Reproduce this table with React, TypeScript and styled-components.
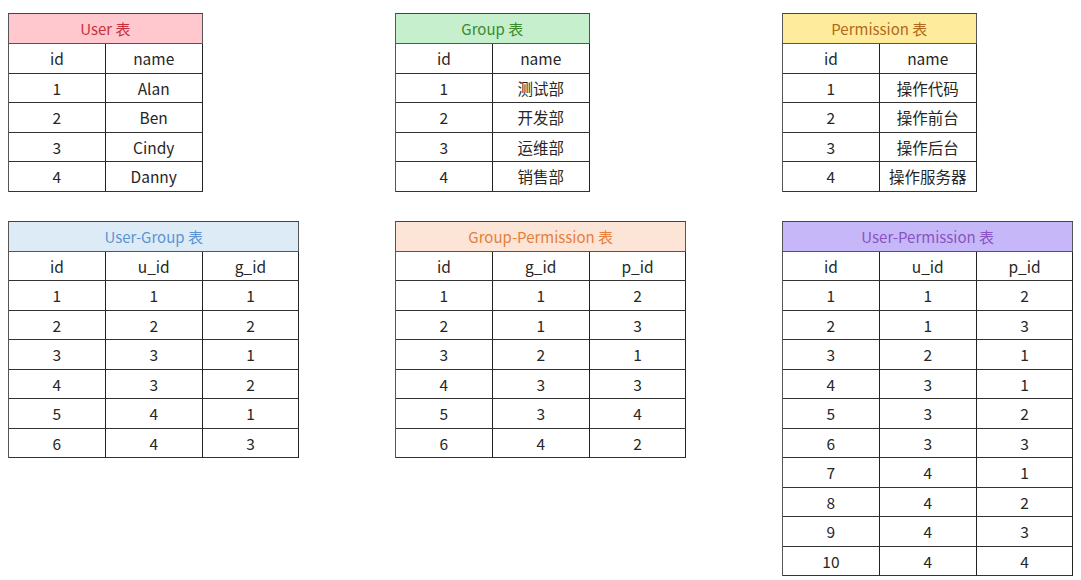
import React from 'react';
import styled, { createGlobalStyle } from 'styled-components';

const GlobalStyle = createGlobalStyle`
  html, body {
    margin: 0;
    padding: 0;
    background: #ffffff;
  }
  body {
    font-family: 'Noto Sans CJK SC', 'Noto Sans', sans-serif;
    color: #262626;
  }
`;

const Page = styled.div`
  display: grid;
  grid-template-columns: 387px 387px 290px;
  row-gap: 25px;
  align-items: start;
  padding: 13px 0 0 8px;
  width: 1081px;
  height: 580px;
  box-sizing: border-box;
  overflow: hidden;
`;

const Sheet = styled.div<{ cols: number }>`
  display: grid;
  grid-template-columns: repeat(${(p) => p.cols}, 96.8px);
  width: max-content;
  border-top: 1px solid #444;
  border-left: 1px solid #555;
`;

const Title = styled.div<{ bg: string; fg: string }>`
  grid-column: 1 / -1;
  height: 30px;
  box-sizing: border-box;
  display: flex;
  align-items: center;
  justify-content: center;
  background: ${(p) => p.bg};
  color: ${(p) => p.fg};
  font-size: 15px;
  border-right: 1px solid #555;
  border-bottom: 1px solid #555;
`;

const Cell = styled.div`
  height: 29.5px;
  box-sizing: border-box;
  display: flex;
  align-items: center;
  justify-content: center;
  font-size: 15.5px;
  border-right: 1px solid #222;
  border-bottom: 1px solid #333;
  white-space: nowrap;
`;

type TableProps = {
  title: string;
  bg: string;
  fg: string;
  head: string[];
  rows: (string | number)[][];
};

const DataTable: React.FC<TableProps> = ({ title, bg, fg, head, rows }) => (
  <Sheet cols={head.length}>
    <Title bg={bg} fg={fg}>{title}</Title>
    {head.map((h) => (
      <Cell key={h}>{h}</Cell>
    ))}
    {rows.map((r, i) => r.map((v, j) => <Cell key={`${i}:${j}`}>{v}</Cell>))}
  </Sheet>
);

const tables: TableProps[] = [
  {
    title: 'User 表',
    bg: '#ffc7ce',
    fg: '#c7303c',
    head: ['id', 'name'],
    rows: [[1, 'Alan'], [2, 'Ben'], [3, 'Cindy'], [4, 'Danny']],
  },
  {
    title: 'Group 表',
    bg: '#c6efce',
    fg: '#3a8a2e',
    head: ['id', 'name'],
    rows: [[1, '测试部'], [2, '开发部'], [3, '运维部'], [4, '销售部']],
  },
  {
    title: 'Permission 表',
    bg: '#ffeb9c',
    fg: '#b0681c',
    head: ['id', 'name'],
    rows: [[1, '操作代码'], [2, '操作前台'], [3, '操作后台'], [4, '操作服务器']],
  },
  {
    title: 'User-Group 表',
    bg: '#ddebf7',
    fg: '#5b95d0',
    head: ['id', 'u_id', 'g_id'],
    rows: [[1, 1, 1], [2, 2, 2], [3, 3, 1], [4, 3, 2], [5, 4, 1], [6, 4, 3]],
  },
  {
    title: 'Group-Permission 表',
    bg: '#fce4d6',
    fg: '#e4803c',
    head: ['id', 'g_id', 'p_id'],
    rows: [[1, 1, 2], [2, 1, 3], [3, 2, 1], [4, 3, 3], [5, 3, 4], [6, 4, 2]],
  },
  {
    title: 'User-Permission 表',
    bg: '#c6b8f8',
    fg: '#8a52c2',
    head: ['id', 'u_id', 'p_id'],
    rows: [
      [1, 1, 2], [2, 1, 3], [3, 2, 1], [4, 3, 1], [5, 3, 2],
      [6, 3, 3], [7, 4, 1], [8, 4, 2], [9, 4, 3], [10, 4, 4],
    ],
  },
];

export default function App() {
  return (
    <>
      <GlobalStyle />
      <Page>
        {tables.map((t) => (
          <DataTable key={t.title} {...t} />
        ))}
      </Page>
    </>
  );
}
